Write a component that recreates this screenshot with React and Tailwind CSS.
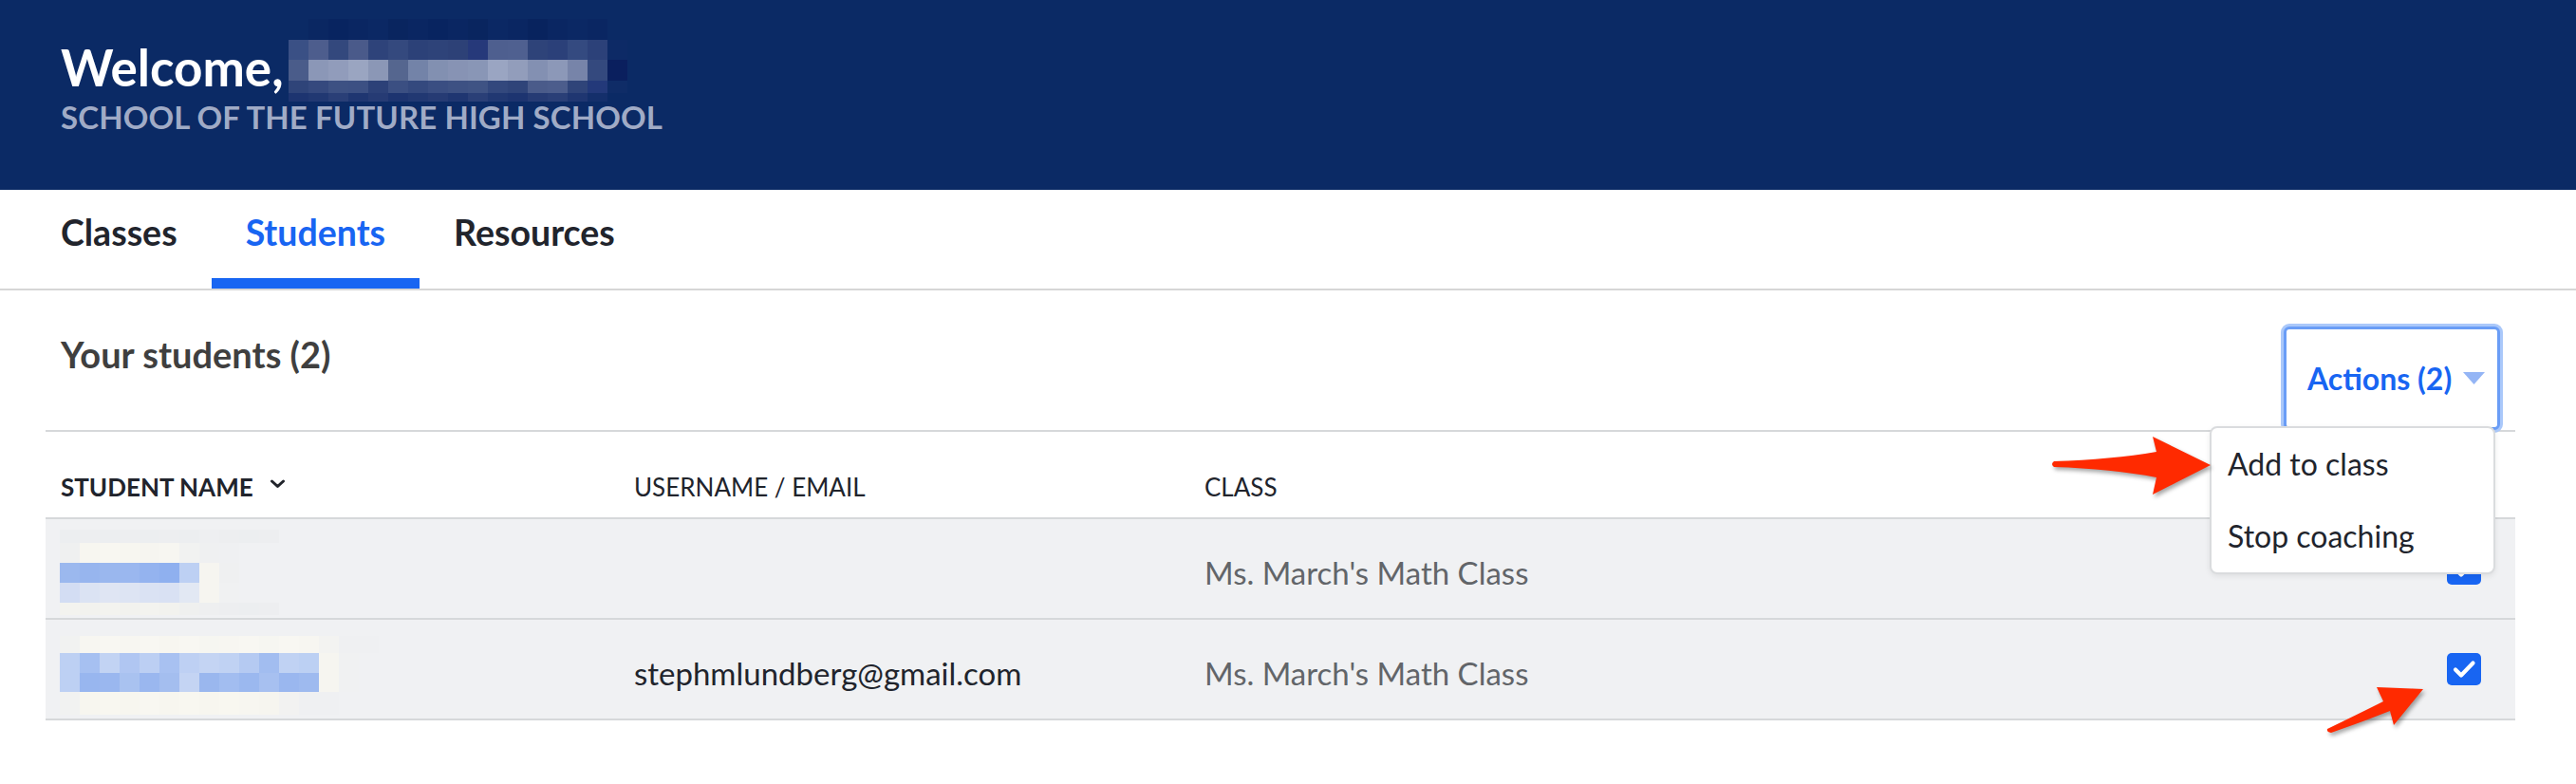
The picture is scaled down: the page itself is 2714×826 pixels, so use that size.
import React from "react";

// pixelated name placeholders (the screenshot blurs real names)
const headerBlur = [
  {
    h: "h-[22px]",
    cells: ["bg-[#0b2a65]", "bg-[#0a2762]", "bg-[#082460]", "bg-[#0a2662]", "bg-[#0b2864]", "bg-[#09255f]", "bg-[#0a2662]", "bg-[#082460]", "bg-[#0a2662]", "bg-[#09255f]", "bg-[#0b2864]", "bg-[#0a2662]", "bg-[#08235e]", "bg-[#0a2662]", "bg-[#0b2864]", "bg-[#0a2662]", "bg-[#0b2a65]", "bg-[#0b2a65]"],
  },
  {
    h: "h-[21px]",
    cells: ["bg-[#3a5085]", "bg-[#4d5d8d]", "bg-[#33487d]", "bg-[#4a5a8a]", "bg-[#2e437a]", "bg-[#34497e]", "bg-[#2c4178]", "bg-[#2e4379]", "bg-[#2d4177]", "bg-[#26397a]", "bg-[#4e5f8f]", "bg-[#4f6090]", "bg-[#2e4379]", "bg-[#2b4079]", "bg-[#344a80]", "bg-[#2c4179]", "bg-[#0d2a66]", "bg-[#0b2a65]"],
  },
  {
    h: "h-[22px]",
    cells: ["bg-[#4a5c8a]", "bg-[#8b97b7]", "bg-[#919cbb]", "bg-[#9aa5c1]", "bg-[#8b97b6]", "bg-[#55668f]", "bg-[#7383a8]", "bg-[#8290b1]", "bg-[#8793b4]", "bg-[#8996b6]", "bg-[#9aa5c2]", "bg-[#929dbb]", "bg-[#8390b2]", "bg-[#8c98b8]", "bg-[#7784a9]", "bg-[#34497e]", "bg-[#0a1f5e]", "bg-[#0b2a65]"],
  },
  {
    h: "h-[13px]",
    cells: ["bg-[#2f4479]", "bg-[#35497e]", "bg-[#3d5183]", "bg-[#3c5083]", "bg-[#2c4178]", "bg-[#3b4f82]", "bg-[#34497e]", "bg-[#3a4e82]", "bg-[#3d5183]", "bg-[#3f5384]", "bg-[#33487d]", "bg-[#2f4479]", "bg-[#4a5b8a]", "bg-[#4c5d8c]", "bg-[#2f4479]", "bg-[#23397a]", "bg-[#0f2c67]", "bg-[#0b2a65]"],
  },
  {
    h: "h-[9px]",
    cells: ["bg-[#1d3470]", "bg-[#213872]", "bg-[#2a3f77]", "bg-[#1f3671]", "bg-[#263b74]", "bg-[#1d3470]", "bg-[#213872]", "bg-[#263b74]", "bg-[#1f3671]", "bg-[#2a3f77]", "bg-[#213872]", "bg-[#1d3470]", "bg-[#263b74]", "bg-[#2a3f77]", "bg-[#1f3671]", "bg-[#142f6b]", "bg-[#0b2a65]", "bg-[#0b2a65]"],
  },
];

const nameBlurA = [
  {
    h: "h-[14px]",
    cells: ["bg-[#eceef0]", "bg-[#edeef0]", "bg-[#eceef0]", "bg-[#edeef0]", "bg-[#eceef0]", "bg-[#edeef0]", "bg-[#eceef0]", "bg-[#eeeff1]", "bg-[#edeef0]", "bg-[#eceef0]", "bg-[#edeef0]"],
  },
  {
    h: "h-[21px]",
    cells: ["bg-[#eff0f0]", "bg-[#f7f6f0]", "bg-[#f8f7f1]", "bg-[#f7f6f0]", "bg-[#f6f5f0]", "bg-[#f7f6f1]", "bg-[#f1f2f1]", "bg-[#eff0f1]", "bg-[#eff0f2]", "bg-[#f0f1f3]", "bg-[#f0f1f3]"],
  },
  {
    h: "h-[21px]",
    cells: ["bg-[#9bb8ee]", "bg-[#97b5ee]", "bg-[#9ab7ee]", "bg-[#9ab7ef]", "bg-[#94b3ef]", "bg-[#8fb0ef]", "bg-[#bdd0f3]", "bg-[#f6f5f0]", "bg-[#eff0f1]", "bg-[#f0f1f3]", "bg-[#f0f1f3]"],
  },
  {
    h: "h-[21px]",
    cells: ["bg-[#d3ddf3]", "bg-[#dbe3f3]", "bg-[#dfe5f3]", "bg-[#dde4f3]", "bg-[#dae2f3]", "bg-[#d9e1f3]", "bg-[#e2e8f3]", "bg-[#f6f5f0]", "bg-[#f0f1f2]", "bg-[#f0f1f3]", "bg-[#f0f1f3]"],
  },
  {
    h: "h-[13px]",
    cells: ["bg-[#f3f3ef]", "bg-[#f2f2ee]", "bg-[#f3f3ef]", "bg-[#f2f2ee]", "bg-[#f3f3ef]", "bg-[#f2f2ee]", "bg-[#eff0ef]", "bg-[#eeeff0]", "bg-[#edeef0]", "bg-[#eceef0]", "bg-[#edeef0]"],
  },
];

const nameBlurB = [
  {
    h: "h-[18px]",
    cells: ["bg-[#f1f2f1]", "bg-[#f7f6f1]", "bg-[#f8f7f2]", "bg-[#f7f6f1]", "bg-[#f8f7f2]", "bg-[#f7f6f0]", "bg-[#f8f7f2]", "bg-[#f6f6f1]", "bg-[#f7f6f1]", "bg-[#f8f7f2]", "bg-[#f6f6f1]", "bg-[#f8f7f2]", "bg-[#f7f6f1]", "bg-[#f3f3f1]", "bg-[#eff0f2]", "bg-[#eff0f2]"],
  },
  {
    h: "h-[21px]",
    cells: ["bg-[#bdd0f3]", "bg-[#a6c0f1]", "bg-[#c2d3f3]", "bg-[#b0c6f2]", "bg-[#bccff3]", "bg-[#a8c1f1]", "bg-[#bed0f3]", "bg-[#c4d4f3]", "bg-[#c0d2f3]", "bg-[#b5caf2]", "bg-[#a2bdf0]", "bg-[#c0d2f3]", "bg-[#bcd0f3]", "bg-[#f6f5f0]", "bg-[#f0f1f2]", "bg-[#f0f1f3]"],
  },
  {
    h: "h-[20px]",
    cells: ["bg-[#bdd0f3]", "bg-[#98b6ef]", "bg-[#9ab7ef]", "bg-[#a9c2f0]", "bg-[#9ab7ef]", "bg-[#a4beef]", "bg-[#c4d4f3]", "bg-[#9ab7ee]", "bg-[#a2bdf0]", "bg-[#9bb8ef]", "bg-[#a7c0f0]", "bg-[#9ab7ef]", "bg-[#9ebaef]", "bg-[#f6f5f0]", "bg-[#f0f1f2]", "bg-[#f0f1f3]"],
  },
  {
    h: "h-[24px]",
    cells: ["bg-[#f1f2f1]", "bg-[#f7f6ef]", "bg-[#f8f7f0]", "bg-[#f7f6ef]", "bg-[#f8f7f1]", "bg-[#f7f6ef]", "bg-[#f8f7f0]", "bg-[#f7f6ef]", "bg-[#f8f7f0]", "bg-[#f7f6f0]", "bg-[#f6f5ef]", "bg-[#f2f2f1]", "bg-[#eff0f2]", "bg-[#eff0f2]", "bg-[#f0f1f3]", "bg-[#f0f1f3]"],
  },
];

function Pixelated({ rows, cell }) {
  return (
    <div className="flex flex-col">
      {rows.map((row, i) => (
        <div key={i} className={`flex ${row.h}`}>
          {row.cells.map((c, j) => (
            <div key={j} className={`${cell} h-full ${c}`} />
          ))}
        </div>
      ))}
    </div>
  );
}

function CheckBox() {
  return (
    <div className="w-[36px] h-[34px] rounded-[5px] bg-[#1865f2] flex items-center justify-center">
      <svg width="36" height="34" viewBox="0 0 36 34" fill="none">
        <path d="M9 17.5 L15 23.5 L27.5 10.5" stroke="white" strokeWidth="4.2" strokeLinecap="round" strokeLinejoin="round" />
      </svg>
    </div>
  );
}

const students = [
  { blur: nameBlurA, blurTop: "mt-[11px]", email: "", cls: "Ms. March's Math Class" },
  { blur: nameBlurB, blurTop: "mt-[17px]", email: "stephmlundberg@gmail.com", cls: "Ms. March's Math Class" },
];

export default function App() {
  return (
    <div className="relative min-h-screen bg-white font-['Lato','Liberation_Sans',sans-serif] overflow-hidden">
      {/* Header */}
      <div className="h-[200px] bg-[#0b2a65] pl-[64px] pt-[44px]">
        <div className="flex items-start">
          <span className="text-[53px] leading-none font-bold text-white">Welcome,</span>
          <span className="relative inline-block w-[378px] h-[52px] ml-[5px]">
            <span className="absolute left-0 top-[-24px]">
              <Pixelated rows={headerBlur} cell="w-[21px]" />
            </span>
          </span>
        </div>
        <div className="mt-[10px] text-[33px] tracking-[0.1px] leading-none font-bold text-[#a0abc6]">
          SCHOOL OF THE FUTURE HIGH SCHOOL
        </div>
      </div>

      {/* Tabs */}
      <div className="h-[106px] border-b-2 border-[#d6d6d6] flex pl-[28px]">
        {["Classes", "Students", "Resources"].map((t) => (
          <div
            key={t}
            className={
              t === "Students"
                ? "h-[104px] px-[36px] pt-[26px] border-b-[11px] border-[#1865f2] text-[37.5px] leading-none font-bold text-[#1865f2]"
                : "h-[104px] px-[36px] pt-[26px] border-b-[11px] border-transparent text-[37.5px] leading-none font-bold text-[#21242c]"
            }
          >
            {t}
          </div>
        ))}
      </div>

      {/* Students section */}
      <div className="pl-[48px] pr-[64px]">
        <div className="h-[147px] flex justify-between items-end">
          <div className="self-start pl-[16px] pt-[48px] text-[38px] leading-none font-bold text-[#3f3f3f]">
            Your students (2)
          </div>
          <div className="relative mr-[16px] z-10">
            <div className="w-[228px] h-[109px] border-[3px] border-[#6a9df6] rounded-[6px] shadow-[0_0_0_3px_#aac8fa] bg-white flex items-center pl-[22px]">
              <span className="text-[32px] leading-none font-bold text-[#1865f2]">Actions (2)</span>
              <svg className="ml-[12px]" width="23" height="13" viewBox="0 0 23 13">
                <path d="M0 0 H23 L11.5 13 Z" fill="#94b5f5" />
              </svg>
            </div>
            <div className="absolute top-[105px] right-[5px] w-[301px] bg-white border-2 border-[#dadcde] rounded-[8px] shadow-[0_2px_6px_rgba(0,0,0,0.08)]">
              <div className="h-[76px] flex items-center pl-[17px] text-[32px] leading-none text-[#21242c]">
                Add to class
              </div>
              <div className="h-[76px] flex items-center pl-[17px] text-[32px] leading-none text-[#21242c]">
                Stop coaching
              </div>
            </div>
          </div>
        </div>

        {/* Table */}
        <div className="border-t-2 border-[#d6d8da]">
          <div className="grid grid-cols-[604px_601px_1fr_auto] h-[92px] border-b-2 border-[#d6d8da] bg-white text-[26px] leading-none text-[#21242c]">
            <div className="pl-[16px] pt-[45px] flex items-start font-bold">
              STUDENT NAME
              <svg className="ml-[17px] mt-[5px]" width="17" height="10" viewBox="0 0 17 10" fill="none">
                <path d="M2.5 2 L8.5 7.5 L14.5 2" stroke="#21242c" strokeWidth="3" strokeLinecap="round" strokeLinejoin="round" />
              </svg>
            </div>
            <div className="pl-[16px] pt-[45px]">USERNAME / EMAIL</div>
            <div className="pl-[16px] pt-[45px]">CLASS</div>
            <div className="w-[72px]" />
          </div>

          {students.map((s, i) => (
            <div
              key={i}
              className="grid grid-cols-[604px_601px_1fr_auto] h-[106px] bg-[#f0f1f3] border-b-2 border-[#d6d8da] items-center text-[33px] leading-none"
            >
              <div className={`pl-[15px] self-start ${s.blurTop}`}>
                <Pixelated rows={s.blur} cell="w-[21px]" />
              </div>
              <div className="pl-[16px] pt-[8px] text-[#21242c]">{s.email}</div>
              <div className="pl-[16px] pt-[8px] text-[#626569]">{s.cls}</div>
              <div className="pr-[36px]">
                <CheckBox />
              </div>
            </div>
          ))}
        </div>
      </div>

      {/* annotation arrows */}
      <svg
        className="absolute left-[2150px] top-[450px] w-[190px] h-[80px] z-30 drop-shadow-[2px_3px_2px_rgba(0,0,0,0.35)]"
        viewBox="2150 450 190 80"
      >
        <path
          d="M2164 486 Q2225 484 2272 476 L2268 460 L2329 490 L2268 521 L2272 503 Q2225 494 2164 492 Q2160 489 2164 486 Z"
          fill="#ff2a00"
        />
      </svg>
      <svg
        className="absolute left-[2440px] top-[710px] w-[130px] h-[75px] z-30 drop-shadow-[2px_3px_2px_rgba(0,0,0,0.35)]"
        viewBox="2440 710 130 75"
      >
        <path
          d="M2452 768 Q2485 752 2511 739 L2504 724 L2553 726 L2522 764 L2518 749 Q2488 761 2456 772 Q2451 771 2452 768 Z"
          fill="#ff2a00"
        />
      </svg>
    </div>
  );
}
